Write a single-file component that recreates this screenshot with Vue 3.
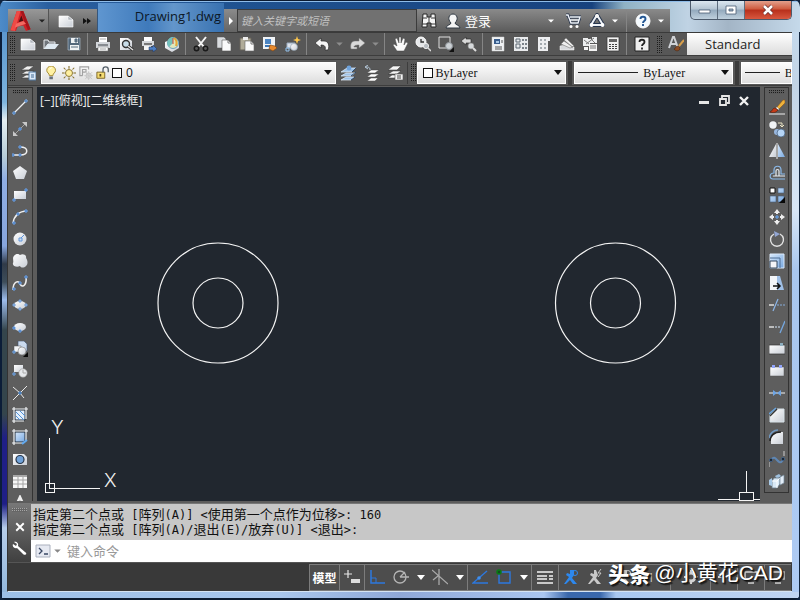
<script setup>
import { ref } from 'vue'

const icons = {
  logo: '<path d="M1 22 8 1h7l8 20-5 2-3-6-6 1-2 5z" fill="#cf2127"/><path d="M1 22 8 1h4L8 15l-2 8z" fill="#ee4a45"/><path d="m10 13 3-7 2 6z" fill="#4c1011"/><path d="M12 1h3l8 20-3 1z" fill="#a5151b"/><path d="m7 15 8-3 3 3-12 4z" fill="#f26a62"/>',
  page: '<path d="M1 3h9l5 4v7H1z" fill="url(#gw)" stroke="#fff" stroke-width=".6"/><path d="m10 3 5 4h-5z" fill="#aeb4bc" stroke="#fff" stroke-width=".5"/>',
  open: '<path d="M1 13V4h4l1 2h6v2H5z" fill="#70757b" stroke="#e8ebee"/><path d="m1 13 4-5h11l-4 5z" fill="#dfe9f1"/>',
  save: '<path d="M2 2h12v12H2z" fill="#53687b" stroke="#a8b8c5" stroke-width=".7"/><path d="M5 2h7v5H5zM4 9h9v5H4z" fill="#eef1f3"/><path d="M9 3h2v3H9zM5 11h7" stroke="#546a7d" fill="#66798a"/>',
  print: '<path d="M4 1h8v5H4z" fill="#fff"/><path d="M1 6h14v6H1z" fill="#d3d6da"/><path d="M3 8h10v2H3z" fill="#878b90"/><path d="M3 11h10v4H3z" fill="#f6f7f8" stroke="#777" stroke-width=".5"/><path d="M5 3h6M5 13h6" stroke="#aaa"/>',
  preview: '<path d="M2 2h8l4 3v9H2z" fill="url(#gw)"/><circle cx="8" cy="8" r="3.5" fill="#c8dce8" stroke="#333" stroke-width="1.4"/><path d="m10 10 5 4" stroke="#333" stroke-width="3"/><path d="m10 10 5 4" stroke="#e0e0e0" stroke-width="1.5"/>',
  publish: '<path d="M3 1h8v4H3z" fill="#fff"/><path d="M1 5h12v5H1z" fill="#d6d9dd"/><path d="M3 7h8v2H3z" fill="#777"/><path d="M3 10h7v4H3z" fill="#f5f5f5"/><path d="M8 11h4V9l4 4-4 3v-2H8z" fill="#4d7fc4" stroke="#1c3560" stroke-width=".5"/>',
  globe: '<path d="M1 6 8 3l7 3v6l-7 4-7-4z" fill="url(#gw)"/><circle cx="9" cy="7" r="5.5" fill="#dfe7bc" stroke="#6ca2bc"/><path d="M9 1v6l-4 4a6 6 0 0 1 4-10z" fill="#72c1bb"/><path d="M10 2c3 2 3 5 2 8" stroke="#e4a936" stroke-width="2" fill="none"/><path d="M9 2v6" stroke="#d24d3a"/>',
  cut: '<path d="m3 1 8 10M13 1 5 11" stroke="#f4f4f4" stroke-width="2"/><circle cx="3.5" cy="12.5" r="2.2" fill="none" stroke="#191919" stroke-width="1.5"/><circle cx="12.5" cy="12.5" r="2.2" fill="none" stroke="#191919" stroke-width="1.5"/>',
  copy: '<path d="M1 1h7l2 2v9H1z" fill="#d9dcdf" stroke="#555" stroke-width=".5"/><path d="M6 4h6l3 3v8H6z" fill="#fafafa" stroke="#555" stroke-width=".6"/><path d="M12 4v3h3" fill="none" stroke="#777"/>',
  paste: '<path d="M1 2h11v12H1z" fill="#b0ab98" stroke="#67635a"/><path d="M4 1h5v3H4z" fill="#eee"/><path d="M6 5h6l3 3v7H6z" fill="#fafafa" stroke="#666" stroke-width=".6"/><path d="M12 5v3h3" stroke="#777" fill="none"/>',
  match: '<path d="M1 1h12v12H1z" fill="#f0f3f6"/><path d="M3 3h6v5H3z" fill="#4c85c3"/><path d="M3 10h5" stroke="#3976b8" stroke-width="2"/><path d="m8 9 5 1 2 2-4 3-4-2z" fill="#e88a2c" stroke="#80420c" stroke-width=".6"/>',
  block: '<path d="M2 7h8v5H2z" fill="#dce3ec" stroke="#9bacbf"/><circle cx="9" cy="11" r="3.5" fill="url(#gw)" stroke="#8799aa" stroke-width=".6"/><path d="M1 12h3v3H1z" fill="none" stroke="#93c2ed"/><path d="m12 0 1 3 3 1-3 1-1 3-1-3-3-1 3-1z" fill="#ffc74d"/>',
  undo: '<path d="m1 7 6-5v3h3c4 0 6 4 4 9h-3c1-3 0-5-4-5v3z" fill="#f5f5f5" stroke="#2c2c2c" stroke-width=".7"/>',
  redo: '<path d="M15 7 9 2v3H5C1 5 0 9 1 13h6v-2H4c0-1 1-2 5-2v3z" fill="#dadada" stroke="#777" stroke-width=".5"/>',
  hand: '<path d="m5 15-4-6 1-1 3 2-2-7 2-1 2 5V1h2v6l2-5 2 1-1 6 2-3 2 1-4 8z" fill="#fafafa" stroke="#444" stroke-width=".5"/>',
  zoomrt: '<circle cx="6" cy="6" r="5" fill="#e7e9eb" stroke="#fff"/><path d="M6 3v3h3" fill="none" stroke="#333" stroke-width="1.3"/><circle cx="11" cy="10" r="2.6" fill="#b9bec3" stroke="#eee"/><path d="m13 12 3 3" stroke="#ddd" stroke-width="1.5"/>',
  zoomwin: '<path d="M1 1h11v11H1z" fill="none" stroke="#dedede"/><circle cx="11" cy="10" r="3.5" fill="#ccd1d5" stroke="#8c9297"/><path d="M11 16h5v-5z" fill="#111"/>',
  zoomprev: '<path d="m0 5 5-4v2h5v4H5v2z" fill="#d8d8d8" stroke="#222" stroke-width=".6"/><circle cx="10" cy="10" r="3" fill="#d6d9db" stroke="#888" stroke-width=".6"/><path d="m12 12 3 3" stroke="#ddd" stroke-width="2"/>',
  props: '<path d="M2 1h12v14H2z" fill="#f0f2f4" stroke="#ccc" stroke-width=".5"/><path d="M4 3h6v5H4z" fill="#3a5e8d"/><path d="M6 5h3v2H6z" fill="#a9c8e8"/><path d="M5 11h7M5 13h7M12 4v3" stroke="#555"/>',
  design: '<path d="M1 1h14v14H1z" fill="#e9ebed"/><path d="M3 3h4v3H3zM3 8h4v4H3z" fill="none" stroke="#5d6873"/><path d="M9 3h2v2H9zm3 0h2v2h-2zM9 7h2v2H9zm3 0h2v2h-2zM9 11h2v2H9zm3 0h2v2h-2z" fill="#7b8289"/>',
  palette: '<path d="M2 1h12v4h-2v10H2z" fill="#edeef0"/><path d="M4 3h2v2H4zm4 0h2v2H8zM4 7h2v2H4zm4 0h2v2H8zm-4 4h2v2H4zm4 0h2v2H8z" fill="#a5abb0"/>',
  sheet: '<path d="M1 10v4h14v-3L6 9z" fill="#d7d9dc" stroke="#fff" stroke-width=".5"/><path d="m2 8 3-3 9 6-3 1zM5 4l2-2 8 8-2 1z" fill="#eee" stroke="#777" stroke-width=".6"/>',
  markup: '<path d="M1 2h5v1h4V1h5v6H8v3H1z" fill="#eceeef"/><path d="m2 4 5 4M8 2l5 5M4 8l8-6" stroke="#777"/><path d="M7 8h8v7H7zM2 11h4v3H2z" fill="#f4f4f4"/><path d="M8 10h6M8 12h6" stroke="#777"/>',
  calc: '<path d="M2 1h12v14H2z" fill="#f2f2f2" stroke="#333" stroke-width=".7"/><path d="M4 3h8v3H4z" fill="#666"/><path d="M4 8h2v1H4zm3 0h2v1H7zm3 0h2v1h-2zm-6 2h2v1H4zm3 0h2v1H7zm3 0h2v1h-2zm-6 2h2v1H4zm3 0h2v1H7zm3 0h2v1h-2z" fill="#444"/>',
  help: '<path d="M1 1h14v14H1z" fill="#eee" stroke="#222"/><path d="M5.5 6c0-3 5-3 5 0 0 2-2.500 2-2.500 4M8 11.500v2" fill="none" stroke="#222" stroke-width="1.800"/>',
  style: '<path d="M1 12 5 1h1l4 11M3 8h5" fill="none" stroke="#cfd2d6" stroke-width="2"/><path d="m11 10 5-6" stroke="#d79e4a" stroke-width="2"/><path d="M6 13c2 0 1-3 4-3l2 2c0 3-4 4-6 1z" fill="#8b4b23" stroke="#4b2106" stroke-width=".5"/>',
  layers: '<path d="M1 5 7 1h7l-5 4zM1 9l5-3h8l-4 3zM1 13l5-3h6l-3 3z" fill="#f0f0f0" stroke="#454545" stroke-width=".7"/><path d="M9 7h7v8H9z" fill="#dceafa" stroke="#557da5"/><path d="M11 10h3M11 12h3" stroke="#416991"/>',
  laycur: '<path d="m0 7 6-4h9l-4 4zM0 11l5-3h9l-4 3zM0 15l5-3h8l-3 3z" fill="#9fc1e5" stroke="#e8f3ff" stroke-width=".7"/><circle cx="8" cy="3" r="2.400" fill="#6fa3dc"/><path d="m11 7 4-4M10 11l5-4M10 15l4-3" stroke="#2d4c70"/>',
  layprev: '<path d="m3 8 4-3h8l-4 3zM3 12l4-3h8l-4 3zM3 16l4-3h7l-3 3z" fill="#fff" stroke="#444" stroke-width=".5"/><path d="M6 5C6 2 4 2 2 2m2-2L1 2l3 2" fill="none" stroke="#b7cadb"/>',
  laystate: '<path d="m1 5 5-4h8l-4 4zM1 9l5-3h8l-4 3zM1 13l4-3h5l-2 3z" fill="#f5f5f5" stroke="#333" stroke-width=".5"/><path d="M8 9h8v6H8z" fill="#f4f4f4" stroke="#555" stroke-width=".6"/><path d="M10 11h4M10 13h4" stroke="#444"/>',
  bulb: '<path d="M5 11c0-3-3-3-3-6a5 5 0 0 1 10 0c0 3-3 3-3 6z" fill="#fff1a3" stroke="#9d8126"/><path d="M5 12h4v3H5z" fill="#68717c"/><path d="M5 4c1-2 3-2 3-2" stroke="#fff" fill="none"/>',
  sun: '<circle cx="8" cy="8" r="4" fill="#fff0a0" stroke="#806a23"/><path d="M8 0v3m0 10v3M0 8h3m10 0h3M2 2l2 2m8 8 2 2M2 14l2-2m8-8 2-2" stroke="#806a23" stroke-width="1.200"/>',
  freeze: '<path d="M4 11H1V1h10v3M4 4h4v3H4zv7" fill="none" stroke="#a2a2a2" stroke-width="1.300"/><circle cx="11" cy="11" r="3" fill="#ececec" stroke="#bbb"/><path d="M11 6v10M6 11h10M7 7l8 8m0-8-8 8" stroke="#c7c7c7"/>',
  lock: '<path d="M1 7h9v7H1z" fill="#f5dc72" stroke="#735b1a"/><path d="M8 7V4c0-4 6-4 6 0v3" fill="none" stroke="#55606a" stroke-width="1.500"/><path d="M5 9v3" stroke="#574312" stroke-width="2"/>',
  arrow: '<path d="m4 6 4 4 4-4z" fill="currentColor"/>',
  binoc: '<path d="M2 1h4v3h4V1h4l1 13h-5v-4H6v4H1z" fill="#f5f5f5" stroke="#272727"/><path d="M2 5h4m4 0h4M1 11h5m4 0h5M8 4v6" stroke="#373737"/>',
  user: '<path d="M1 15c0-3 5-3 5-5-4-4-2-9 2-9s6 5 2 9c0 2 5 2 5 5z" fill="#f5f5f5" stroke="#303943"/>',
  cart: '<path d="M1 2h2l3 8h7l2-6H5" fill="none" stroke="#233149" stroke-width="3"/><path d="M1 2h2l3 8h7l2-6H5m0 3h9" fill="none" stroke="#f0f3f8" stroke-width="1.500"/><circle cx="6" cy="13.500" r="1.500" fill="#fff"/><circle cx="12" cy="13.500" r="1.500" fill="#fff"/>',
  cloud: '<path d="M8 2 2 12h12z" fill="none" stroke="#27364e" stroke-width="4" stroke-linejoin="round"/><path d="M8 2 2 12h12z" fill="none" stroke="#eef2f7" stroke-width="2" stroke-linejoin="round"/><circle cx="8" cy="3" r="2" fill="#f5f5f5"/><circle cx="2.500" cy="12" r="2" fill="#fff"/><circle cx="13.500" cy="12" r="2" fill="#fff"/>',
  qhelp: '<circle cx="8" cy="8" r="7" fill="#f5fbff" stroke="#fff"/><path d="M5.500 6c0-3 5-3 5 0 0 2-2.500 2-2.500 4M8 11v2" fill="none" stroke="#245793" stroke-width="1.900"/>',
  line: '<path d="M1 15 15 1" stroke="#eef0f2" stroke-width="1.300"/><path d="M1 13h2v2H1zM13 1h2v2h-2z" fill="#334967" stroke="#70a8ec"/>',
  xline: '<path d="M2 14 14 2" stroke="#a5a5a5"/><path d="M10 1h5v5zM1 10v5h5z" fill="#c8c8c8"/><path d="M7 7h2v2H7z" fill="#1f4e95" stroke="#6ba5f1"/>',
  pline: '<path d="M1 12h7c9 0 9-8 0-8" fill="none" stroke="#eee" stroke-width="1.500"/><path d="M0 11h2v2H0zm7 0h2v2H7zm0-8h2v2H7z" fill="#334967" stroke="#6da7f3"/>',
  polygon: '<path d="m8 1 7 5-3 8H4L1 6z" fill="url(#gw)"/>',
  rect: '<path d="M2 4h12v8H2z" fill="url(#gw)"/><path d="M1 12h2v2H1zM13 2h2v2h-2z" fill="#334967" stroke="#6da7f3"/>',
  arc: '<path d="M1 14C2 7 7 2 15 2" fill="none" stroke="#eee" stroke-width="1.400"/><path d="M1 13h2v2H1zm4-9h2v2H5zm8-3h2v2h-2z" fill="#334967" stroke="#6da7f3"/>',
  circle: '<circle cx="8" cy="8" r="6.500" fill="url(#gw)"/><path d="m8 8 4-4" stroke="#5890d8"/><path d="M7 7h3v3H7z" fill="#cfdeef" stroke="#6298dc"/>',
  revcloud: '<path d="M2 3c2-3 5-2 6-1 3-2 7 0 6 3 2 3 2 6 0 8-2 2-5 2-6 0-3 2-8 0-7-3 1-2-1-5 1-7z" fill="url(#gw)"/>',
  spline: '<path d="M1 15C1 6 7 5 8 9c3 5 7 0 6-7" fill="none" stroke="#eee" stroke-width="1.500"/><path d="M1 13h2v2H1zm6-6h2v2H7zm6-6h2v2h-2z" fill="#334967" stroke="#6da7f3"/>',
  ellipse: '<ellipse cx="8" cy="8" rx="6" ry="4" fill="url(#gw)"/><path d="M1 7h2v2H1zm12 0h2v2h-2zM7 3h2v2H7zm0 8h2v2H7z" fill="#b9cde6" stroke="#6d9bd8"/>',
  elarc: '<ellipse cx="8" cy="8" rx="6" ry="4" fill="url(#gw)"/><path d="M1 8h2v2H1zm6 3h2v2H7z" fill="#334967" stroke="#6da7f3"/>',
  insert: '<path d="M6 0h6l3 3v7H6z" fill="#cad9ec" stroke="#3c536f" stroke-width=".6"/><path d="M2 5h7v6H2z" fill="#f3f5f7" stroke="#555" stroke-width=".5"/><circle cx="10" cy="10" r="4" fill="url(#gw)" stroke="#777" stroke-width=".6"/><path d="M1 10h2v2H1z" fill="#345" stroke="#77adf0"/><path d="M11 16h5v-5z" fill="#080808"/>',
  makeblk: '<path d="M2 2h9v7H2z" fill="url(#gw)"/><circle cx="11" cy="10" r="4.200" fill="#e6e8eb" stroke="#999" stroke-width=".6"/><path d="M11 7v3h3" fill="none" stroke="#aaa"/><path d="M1 10h2v2H1z" fill="#345" stroke="#77adf0"/>',
  point: '<path d="m1 15 14-14M1 2l7 6 4 5" fill="none" stroke="#e9e9e9"/><path d="M7 7h2v2H7z" fill="#234570" stroke="#619ce0"/>',
  hatch: '<path d="M3 3h10v10H3z" fill="#e4effb" stroke="#1d2937"/><path d="m4 5 8 8M4 9l4 4M8 4l5 5" stroke="#4f91d9"/><path d="M0 2h16M0 14h12M2 0v16M14 0v12" stroke="#f0f3f6" stroke-width="1.200"/>',
  gradient: '<path d="M3 3h10v10H3z" fill="url(#gb)" stroke="#1d2937"/><path d="M0 2h16M0 14h11M2 0v16M14 0v12" stroke="#f0f3f6" stroke-width="1.200"/><path d="m10 15 5-4" stroke="#62aaf1" stroke-width="2"/>',
  region: '<path d="M1 3h11l3 3v8H1z" fill="url(#gw)"/><circle cx="8" cy="8.500" r="4" fill="#70a2d9" stroke="#28364a" stroke-width="1.200"/>',
  table: '<path d="M1 2h14v13H1z" fill="#f7f7f7"/><path d="M1 3h14" stroke="#a7a7a7" stroke-width="2"/><path d="M1 7h14M1 11h14M6 4v11m5-11v11" stroke="#a5a5a5"/>',
  text: '<path d="M3 13 8 2l5 11" fill="none" stroke="#eee" stroke-width="2.500"/>',
  erase: '<path d="m8 8 6-7h2v3l-6 6z" fill="#efb23b" stroke="#8c5617" stroke-width=".6"/><path d="m8 8 2 2-1 1-2-2z" fill="#fff"/><path d="M1 13c3-1 2-4 5-4l3 2c-2 3-5 3-8 2z" fill="#c53b18" stroke="#4e1b0a" stroke-width=".6"/><path d="M0 15h16" stroke="#eee"/>',
  dup: '<circle cx="4" cy="4" r="3.700" fill="#f1f4f7"/><circle cx="8" cy="11" r="3" fill="#98b7df"/><circle cx="12" cy="12" r="4" fill="#b6d5f6" stroke="#405c7b" stroke-width=".7"/><path d="M9 2h4v3m-2-1 2 2 2-2" fill="none" stroke="#e9e3c4"/>',
  mirror: '<path d="M7 1v13H0z" fill="url(#gw)"/><path d="M9 1v13h7z" fill="url(#gb)"/><path d="M8 0v16" stroke="#f0f0f0"/>',
  offset: '<path d="M16 14H4c-4 0-4-6 1-6V5c0-5 7-5 7 0v4h4" fill="none" stroke="#8ab9ea" stroke-width="1.200"/><path d="M16 11H5c-1 0-1 0 2 0V6c0-2 3-2 3 0v5" fill="none" stroke="#e8eef4" stroke-width="1.200"/>',
  array: '<path d="M1 1h5v5H1z" fill="#fff" stroke="#111"/><path d="M9 1h6v5H9zM1 9h6v6H1zM9 9h6v6H9z" fill="url(#gb)" stroke="#445c78" stroke-width=".6"/><path d="M10 16h6v-6z" fill="#080808"/>',
  move: '<path d="m8 0 3 4H9v1H7V4H5zm0 16-3-4h2v-1h2v1h2zM0 8l4-3v2h1v2H4v2zm16 0-4 3V9h-1V7h1V5z" fill="#eee"/><path d="M7 7h2v2H7z" fill="#254d7e" stroke="#75adf1"/>',
  rotate: '<path d="M5 3a6.500 6.500 0 1 0 6 0" fill="none" stroke="#e2e2e2" stroke-width="1.400"/><path d="m5 0 6 3-5 3z" fill="#92a5d2"/>',
  scale: '<path d="M1 1h14v14H1z" fill="url(#gb)" stroke="#dceafb"/><path d="M1 8h7v7H1z" fill="#f4f5f7" stroke="#35485f"/><path d="M1 5h10v10" fill="none" stroke="#4c6c93"/>',
  stretch: '<path d="M1 1h8v14H1z" fill="#f2f5f9"/><path d="M8 1h3l4 14H8z" fill="#9fbfe6"/><path d="M4 11h7m-3-3 3 3-3 3" fill="none" stroke="#101010" stroke-width="1.500"/>',
  trim: '<path d="M0 8h5" stroke="#f2f2f2" stroke-width="1.300"/><path d="M8 8h8" stroke="#85abd8" stroke-dasharray="2 1"/><path d="M4 14 9 2" stroke="#8cb6e9" stroke-width="1.200"/>',
  extend: '<path d="M0 8h5" stroke="#f2f2f2" stroke-width="1.300"/><path d="M6 8h6" stroke="#d5e7fb" stroke-dasharray="2 1"/><path d="m11 14 5-12" stroke="#75a7df" stroke-width="1.300"/>',
  breakpt: '<path d="M0 4h16v9H0z" fill="url(#gw)" stroke="#333" stroke-width=".7"/><path d="M11 2h3v3h-3z" fill="#8daebf"/>',
  breaks: '<path d="M1 4h14v9H1z" fill="url(#gw)" stroke="#555" stroke-width=".5"/><path d="M3 2h3v3H3zm7 0h3v3h-3z" fill="#92a5fb"/>',
  join: '<path d="M0 8h16" stroke="#f3f3f3"/><path d="m4 5 4 3-4 3zm8 0L8 8l4 3z" fill="#6ea5e4"/>',
  chamfer: '<path d="M1 15V8l7-6h7v13z" fill="url(#gw)" stroke="#d7e2e8"/><path d="m1 9 7-7" stroke="#333" stroke-width="1.500"/><path d="m0 7 7-6" stroke="#6aa5df" stroke-width="1.500"/>',
  fillet: '<path d="M2 15v-4c0-5 4-8 10-8h2v12z" fill="url(#gw)"/><path d="M1 12C1 7 5 3 12 3" fill="none" stroke="#222" stroke-width="1.500"/><path d="M0 9c1-5 5-8 9-8" fill="none" stroke="#6f97c0" stroke-width="1.500"/>',
  blend: '<path d="M0 16v-5M15 5V0" fill="none" stroke="#ccc"/><path d="M2 9c5-8 7 8 12 0" fill="none" stroke="#5f86b2" stroke-width="2"/><circle cx="2" cy="9" r="1.500" fill="#111" stroke="#41648c"/><circle cx="14" cy="8" r="1.500" fill="#111" stroke="#41648c"/>',
  explode: '<path d="m6 3 4-2 2 2-4 3z" fill="#9fc0de"/><path d="m3 8 2-3h6v6l-3 4H3z" fill="#d9e9f6" stroke="#697c8b" stroke-width=".8"/><path d="M3 8h5v7M8 8l3-3" fill="none" stroke="#fff"/><path d="m11 4 4-2v8l-4 2z" fill="#e3edf7" stroke="#71879a" stroke-width=".7"/><path d="m0 7 3-2v8l-3-1z" fill="#a8c9e6"/>',
  wrench: '<path d="M2 2c2-1 5 1 4 4l7 6c3 2 0 4-2 2L5 8C2 9 0 6 1 4l3 2 1-2z" fill="#fff"/>',
  close: '<path d="m3 3 10 10M13 3 3 13" stroke="currentColor" stroke-width="2.500"/>',
  prompt: '<path d="M1 2h14v12H1z" fill="#e6e9f1" stroke="#aab0bd"/><path d="m4 5 3 3-3 3m5 0h4" fill="none" stroke="#394763" stroke-width="1.300"/>',
  grid: '<path d="M4 1v8M0 5h8" stroke="#e7e7e7" stroke-width="1.200"/><path d="M7 10h9v4H7z" fill="#ddd"/>',
  ortho: '<path d="M2 1v13h14" fill="none" stroke="#2d78de" stroke-width="1.500"/><path d="M2 9h5v5" fill="none" stroke="#2d78de"/>',
  polar: '<circle cx="7" cy="8" r="6" fill="none" stroke="#b5b5b5" stroke-width="1.300"/><path d="M7 8h9M7 8l5-5" stroke="#b5b5b5" stroke-width="1.300"/>',
  iso: '<path d="M0 1 16 15M7 0v16M1 11l5-4" stroke="#a9a9a9" stroke-width="1.300"/>',
  track: '<path d="M15 2 1 14h15" fill="none" stroke="#2d78de" stroke-width="1.400"/><circle cx="7" cy="9" r="1.800" fill="#3f8fee"/>',
  osnap: '<path d="M3 3h11v11H3z" fill="none" stroke="#2d78de" stroke-width="1.400"/><circle cx="3" cy="3" r="2" fill="#154c1d" stroke="#087d14" stroke-width="1.500"/>',
  weight: '<path d="M0 3h16M0 7h10m2 0h4M0 10h10m2 0h4M0 14h16" stroke="#c9c9c9" stroke-width="2"/>',
  anno: '<path d="M7 1h4v5l-2 3 5 6h-4l-3-4-4 4H1l5-7-3-2 1-2 3 1z" fill="currentColor"/><circle cx="12" cy="4" r="2.500" fill="none" stroke="currentColor"/>',
  spark: '<path d="M7 1h2l2 5-2 3 5 6h-4l-3-4-4 4H1l5-7-3-2 1-2 3 1z" fill="currentColor"/><path d="m14 0-3 4h3l-3 4" fill="none" stroke="currentColor"/>',
  gear: '<circle cx="8" cy="8" r="4" fill="none" stroke="#d4d4d4" stroke-width="3"/><path d="M8 1v3m0 8v3M1 8h3m8 0h3" stroke="#d4d4d4" stroke-width="2"/>',
  plus: '<path d="M8 2v12M2 8h12" stroke="#d4d4d4" stroke-width="2"/>',
  tray: '<path d="M2 3h12v7H2zm3 11h6" fill="none" stroke="#d4d4d4" stroke-width="1.500"/>',
}

const standard = [
  ['page', 'open', 'save'],
  ['print', 'preview', 'publish', 'globe'],
  ['cut', 'copy', 'paste', 'match', 'block'],
  ['undo', 'redo'],
  ['hand', 'zoomrt', 'zoomwin', 'zoomprev'],
  ['props', 'design', 'palette', 'sheet', 'markup', 'calc'],
  ['help'],
]
const drawTools = ['line', 'xline', 'pline', 'polygon', 'rect', 'arc', 'circle', 'revcloud', 'spline', 'ellipse', 'elarc', 'insert', 'makeblk', 'point', 'hatch', 'gradient', 'region', 'table', 'text']
const modifyTools = ['erase', 'dup', 'mirror', 'offset', 'array', 'move', 'rotate', 'scale', 'stretch', 'trim', 'extend', 'breakpt', 'breaks', 'join', 'chamfer', 'fillet', 'blend', 'explode']
const history = [
  ['指定第二个点或', ' [', '阵列', '(A)] <', '使用第一个点作为位移', '>: 160'],
  ['指定第二个点或', ' [', '阵列', '(A)/', '退出', '(E)/', '放弃', '(U)] <', '退出', '>:'],
]
const query = ref('')
const command = ref('')
</script>

<template>
  <div class="window">
    <svg class="defs" aria-hidden="true">
      <defs>
        <linearGradient id="gw" x1="0" y1="0" x2="1" y2="1"><stop offset="0" stop-color="#fff" /><stop offset="1" stop-color="#c9ced6" /></linearGradient>
        <linearGradient id="gb" x1="0" y1="0" x2="1" y2="1"><stop offset="0" stop-color="#d5e7fa" /><stop offset="1" stop-color="#78a8e0" /></linearGradient>
      </defs>
    </svg>

    <header class="titlebar">
      <button class="appbtn" aria-label="Application menu">
        <svg class="logo" viewBox="0 0 24 24" v-html="icons.logo"></svg>
        <svg class="ic" viewBox="0 0 16 16" v-html="icons.arrow"></svg>
      </button>
      <div class="quick">
        <button aria-label="New"><svg class="ic" viewBox="0 0 16 16" v-html="icons.page"></svg></button>
        <button aria-label="More"><svg class="more" viewBox="0 0 8 8"><path d="M0 1l4 3-4 3zM4 1l4 3-4 3z" /></svg></button>
      </div>
      <h1 class="title">Drawing1.dwg</h1>
      <button class="expand" aria-label="Expand search"><svg viewBox="0 0 6 8"><path d="m1 0 4 4-4 4z" fill="#fff" /></svg></button>
      <input v-model="query" class="search" type="search" placeholder="键入关键字或短语" aria-label="Search">
      <div class="info">
        <button aria-label="Find"><svg class="ic" viewBox="0 0 16 16" v-html="icons.binoc"></svg></button>
        <button class="signin"><svg class="ic" viewBox="0 0 16 16" v-html="icons.user"></svg><span>登录</span></button>
        <button class="push slim" aria-label="Account menu"><svg class="ic" viewBox="0 0 16 16" v-html="icons.arrow"></svg></button>
        <button aria-label="Store"><svg class="ic" viewBox="0 0 16 16" v-html="icons.cart"></svg></button>
        <button aria-label="Cloud"><svg class="ic" viewBox="0 0 16 16" v-html="icons.cloud"></svg></button>
        <button class="slim" aria-label="Cloud menu"><svg class="ic" viewBox="0 0 16 16" v-html="icons.arrow"></svg></button>
        <i class="bar"></i>
        <button aria-label="Help"><svg class="ic" viewBox="0 0 16 16" v-html="icons.qhelp"></svg></button>
        <button class="slim" aria-label="Help menu"><svg class="ic" viewBox="0 0 16 16" v-html="icons.arrow"></svg></button>
      </div>
      <div class="winbtns">
        <button aria-label="Minimize"><svg viewBox="0 0 14 12"><path d="M2 6h11v3H2z" fill="#fff" stroke="#4c5d73" stroke-width=".8" /></svg></button>
        <button aria-label="Maximize"><svg viewBox="0 0 14 12"><path d="M2 2h10v8H2zm3 3h4v2H5z" fill="#fff" fill-rule="evenodd" stroke="#4c5d73" stroke-width=".8" /></svg></button>
        <button class="x" aria-label="Close"><svg viewBox="0 0 14 12"><path d="m3 2 8 8m0-8-8 8" stroke="#6b3030" stroke-width="4" /><path d="m3 2 8 8m0-8-8 8" stroke="#fff" stroke-width="2.500" /></svg></button>
      </div>
    </header>

    <div class="body">
      <div class="toolbar">
        <i class="grip"></i>
        <div v-for="(group, g) in standard" :key="g" class="group">
          <template v-for="name in group" :key="name">
            <button class="tool" :aria-label="name"><svg class="ic" viewBox="0 0 16 16" v-html="icons[name]"></svg></button>
            <button v-if="g === 3" class="drop" :aria-label="name + ' list'"><svg class="ic" viewBox="0 0 16 16" v-html="icons.arrow"></svg></button>
          </template>
        </div>
        <i class="grip second"></i>
        <button class="tool" aria-label="Text style"><svg class="ic" viewBox="0 0 16 16" v-html="icons.style"></svg></button>
        <select class="textstyle" aria-label="Text style list"><option>Standard</option></select>
      </div>

      <div class="toolbar props">
        <i class="grip"></i>
        <button class="tool" aria-label="Layer manager"><svg class="ic" viewBox="0 0 16 16" v-html="icons.layers"></svg></button>
        <label class="combo layer">
          <select aria-label="Layer"><option>0</option></select>
          <span class="deco">
            <svg v-for="n in ['bulb', 'sun', 'freeze', 'lock']" :key="n" class="ic" viewBox="0 0 16 16" v-html="icons[n]"></svg>
            <i class="swatch"></i>
          </span>
          <i class="tri"></i>
        </label>
        <div class="laytools">
          <button v-for="n in ['laycur', 'layprev', 'laystate']" :key="n" class="tool" :aria-label="n"><svg class="ic" viewBox="0 0 16 16" v-html="icons[n]"></svg></button>
        </div>
        <i class="grip"></i>
        <label class="combo color">
          <select aria-label="Color"><option>ByLayer</option></select>
          <span class="deco"><i class="swatch"></i></span>
          <i class="tri"></i>
        </label>
        <i class="split"></i>
        <label class="combo ltype">
          <select aria-label="Linetype"><option>ByLayer</option></select>
          <span class="deco"><i class="rule"></i></span>
          <i class="tri"></i>
        </label>
        <i class="split"></i>
        <label class="combo lweight">
          <select aria-label="Lineweight"><option>ByLayer</option></select>
          <span class="deco"><i class="rule"></i></span>
        </label>
      </div>

      <main class="work">
        <nav class="side left" aria-label="Draw">
          <i class="hgrip"></i>
          <button v-for="n in drawTools" :key="n" :aria-label="n"><svg class="ic" viewBox="0 0 16 16" v-html="icons[n]"></svg></button>
        </nav>
        <section class="canvas">
          <div class="viewbar">
            <span>[−][俯视][二维线框]</span>
            <div class="docbtns">
              <button aria-label="Minimize drawing"><svg viewBox="0 0 12 12"><path d="M1 6h10v3H1z" fill="#e6e6e6" /></svg></button>
              <button aria-label="Restore drawing"><svg viewBox="0 0 12 12"><path d="M4 3V1h7v7H9M2 4h6v6H2z" fill="none" stroke="#e6e6e6" stroke-width="1.800" /></svg></button>
              <button aria-label="Close drawing"><svg viewBox="0 0 12 12"><path d="m2 2 8 8m0-8-8 8" stroke="#f2f2f2" stroke-width="2.400" /></svg></button>
            </div>
          </div>
          <svg class="drawing" viewBox="0 0 723 414" preserveAspectRatio="xMinYMax meet">
            <g fill="none" stroke="#f4f4f4" stroke-width="1.200">
              <circle cx="181" cy="216" r="60" /><circle cx="181" cy="216" r="25" />
              <circle cx="578.500" cy="216" r="60" /><circle cx="578.500" cy="216" r="25" />
            </g>
            <g fill="none" stroke="#f4f4f4" shape-rendering="crispEdges">
              <path d="M12.500 351v50H63M8.500 396.500h9v9h-9z" />
              <path d="M709.500 384v21M681 412.500h42" /><path d="M702.500 405.500h14v8h-14z" fill="#21272f" />
            </g>
            <text x="14" y="347">Y</text><text x="67" y="400">X</text>
          </svg>
        </section>
        <nav class="side right" aria-label="Modify">
          <i class="hgrip"></i>
          <button v-for="n in modifyTools" :key="n" :aria-label="n"><svg class="ic" viewBox="0 0 16 16" v-html="icons[n]"></svg></button>
        </nav>
      </main>

      <section class="command">
        <div class="cmdside">
          <i class="hgrip pale"></i>
          <button aria-label="Close command line"><svg viewBox="0 0 16 16" v-html="icons.close"></svg></button>
          <button aria-label="Customize"><svg class="big" viewBox="0 0 16 16" v-html="icons.wrench"></svg></button>
        </div>
        <div class="cmdmain">
          <div class="history">
            <p v-for="(row, r) in history" :key="r"><span v-for="(part, i) in row" :key="i" :class="{ mono: i % 2 }">{{ part }}</span></p>
          </div>
          <div class="entry">
            <button aria-label="Recent commands"><svg class="ic" viewBox="0 0 16 16" v-html="icons.prompt"></svg><svg class="ic small" viewBox="0 0 16 16" v-html="icons.arrow"></svg></button>
            <input v-model="command" type="text" placeholder="键入命令" aria-label="Command">
          </div>
        </div>
      </section>

      <footer class="status">
        <div class="cell"><button class="model">模型</button></div>
        <div class="cell"><button aria-label="Grid"><svg class="ic" viewBox="0 0 16 16" v-html="icons.grid"></svg></button></div>
        <div class="cell">
          <button aria-label="Ortho"><svg class="ic" viewBox="0 0 16 16" v-html="icons.ortho"></svg></button>
          <button aria-label="Polar"><svg class="ic" viewBox="0 0 16 16" v-html="icons.polar"></svg></button>
          <button class="dd" aria-label="Polar list"><i class="tri"></i></button>
          <button aria-label="Isometric"><svg class="ic" viewBox="0 0 16 16" v-html="icons.iso"></svg></button>
          <button class="dd" aria-label="Isometric list"><i class="tri"></i></button>
        </div>
        <div class="cell">
          <button aria-label="Tracking"><svg class="ic" viewBox="0 0 16 16" v-html="icons.track"></svg></button>
          <button aria-label="Object snap"><svg class="ic" viewBox="0 0 16 16" v-html="icons.osnap"></svg></button>
          <button class="dd" aria-label="Object snap list"><i class="tri"></i></button>
        </div>
        <div class="cell roomy"><button aria-label="Lineweight"><svg class="ic" viewBox="0 0 16 16" v-html="icons.weight"></svg></button></div>
        <div class="cell grow">
          <button class="on" aria-label="Annotation visibility"><svg class="ic" viewBox="0 0 16 16" v-html="icons.anno"></svg></button>
          <button aria-label="Auto scale"><svg class="ic" viewBox="0 0 16 16" v-html="icons.spark"></svg></button>
          <button class="scale"><svg class="ic" viewBox="0 0 16 16" v-html="icons.anno"></svg><span>1:1</span></button>
        </div>
        <div class="cell wide"><button aria-label="Workspace"><svg class="ic" viewBox="0 0 16 16" v-html="icons.gear"></svg></button></div>
        <div class="cell roomy"><button aria-label="Add"><svg class="ic" viewBox="0 0 16 16" v-html="icons.plus"></svg></button></div>
        <div class="cell roomy"><button aria-label="Tray"><svg class="ic" viewBox="0 0 16 16" v-html="icons.tray"></svg></button></div>
        <div class="cell roomy"><button aria-label="Clean screen"><svg class="ic" viewBox="0 0 16 16" v-html="icons.tray"></svg></button></div>
        <div class="mark"><b>头条</b><span>@小黄花CAD</span></div>
      </footer>
    </div>
  </div>
</template>

<style>
body { margin: 0; background: #10243f; }
</style>

<style scoped>
* { box-sizing: border-box; }
.window {
  height: 100vh; display: flex; flex-direction: column; overflow: hidden;
  padding: 0 8px 8px 7px;
  border-radius: 7px;
  font-family: "Open Sans", "Noto Sans CJK SC", sans-serif; font-size: 12px; color: #fff;
  background:
    linear-gradient(#0b1d38, #0b1d38) 0 0 / 2px 100% no-repeat,
    linear-gradient(#10233c, #10233c) 100% 0 / 1px 100% no-repeat,
    linear-gradient(#0d1c30, #0d1c30) 0 100% / 100% 2px no-repeat,
    linear-gradient(90deg, #9cc0e8, #a9c7ec 35%, #8fa8d8 50%, #aac6f0 68%, #3a68ac 71%, #3a68ac 75%, #a9c8f0 77%, #c0d5f2) 0 100% / 100% 8px no-repeat,
    linear-gradient(#c6dcf0, #c2d4e6 14%, #d8e6f6 35%, #a8c6ee 45%, #aecbf4 100%) 100% 0 / 8px 100% no-repeat,
    linear-gradient(#4d8ac6, #7db4df 17%, #e4eef2 20%, #b7cdd8 26%, #8faee4 30%, #87a6de 41%, #303a48 44%, #3d4d5a 47%, #9dbdee 50%, #34454c 55%, #34454c 69%, #1f1f86 73%, #1f1f86 84%, #b6cdea 88%, #8fb6dd) 0 0 / 7px 100% no-repeat;
}
.defs { width: 0; height: 0; position: absolute; }
button { border: 0; padding: 0; margin: 0; background: none; color: inherit; font: inherit; display: flex; align-items: center; justify-content: center; }
.ic { width: 16px; height: 16px; flex: none; display: block; }

.titlebar {
  flex: none; height: 32px; display: flex; align-items: flex-end; margin: 0 -8px 0 -7px; padding: 0 8px;
  border-top: 1px solid #0b1a30; box-shadow: inset 0 1px #8fbce8;
  background: linear-gradient(90deg, #4d8bc8, #2a5f9f 6%, #1f5290 30%, #17427e 74%, #8fb2c4 78%, #c0d3e4 86%, #a3b5c6 91%, #c5d9ea);
}
.appbtn { width: 41px; height: 23px; padding-left: 1px; gap: 4px; justify-content: flex-start; background: linear-gradient(#989898, #6d6d6d); color: #222; border-right: 1px solid #555; }
.logo { flex: none; width: 23px; height: 22px; }
.appbtn .ic { width: 12px; }
.quick { width: 49px; height: 23px; display: flex; align-items: center; padding-left: 9px; gap: 9px; background: linear-gradient(#8c8c8c, #5a5a5a); border-right: 1px solid #35567c; }
.more { width: 8px; height: 8px; fill: #111; }
.title { margin: 0; flex: none; width: 126px; height: 29px; font: 400 13px/27px "Open Sans", sans-serif; text-align: right; padding-right: 3px; color: #0c1726; background: linear-gradient(90deg, #5f96d0, #3f7abb 40%, #6396cb 60%, #3871b0); }
.expand { width: 13px; height: 23px; background: linear-gradient(#8b8b8b, #646464); }
.expand svg { width: 6px; height: 8px; }
.search { flex: 0 1 180px; min-width: 0; height: 23px; padding: 0 3px 2px; border: 1px solid #3c3c3c; border-radius: 0; background: #717171; color: #fff; font: italic 11px "Noto Sans CJK SC", sans-serif; appearance: none; outline: 0; }
.search::placeholder { color: #c0c0c0; opacity: 1; }
.info { flex: 0 1 253px; height: 23px; display: flex; align-items: center; padding-right: 3px; background: linear-gradient(#8a8a8a, #5b5b5b); }
.info button { height: 22px; width: 24px; flex: none; }
.info .signin { width: 54px; gap: 4px; font-size: 13px; font-family: "Noto Sans CJK SC", sans-serif; }
.info .slim { width: 12px; }
.info .slim .ic { width: 12px; }
.info .push { margin-left: auto; width: 20px; }
.info .bar { width: 1px; height: 22px; background: #858585; margin: 0 4px 0 5px; }
.winbtns { margin-left: auto; align-self: flex-start; display: flex; height: 19px; border: 1px solid #4c5a6b; border-top: 0; border-radius: 0 0 5px 5px; overflow: hidden; background: linear-gradient(#dce7f0, #b4c4d2 45%, #93a9bd 50%, #bfd0dd); }
.winbtns button { width: 27px; border-right: 1px solid #5d6c7d; }
.winbtns .x { width: 46px; border: 0; background: linear-gradient(#e3a08c, #cf5a3e 45%, #b82f1b 50%, #d8583f); }
.winbtns svg { width: 14px; height: 12px; }

.body { flex: 1; min-height: 0; display: flex; flex-direction: column; background: #5c5c5c; border-left: 1px solid #333; border-bottom: 1px solid #d5e3f2; }
.toolbar { flex: none; height: 24px; display: flex; align-items: center; background: #575757; border-top: 1px solid #3a3a3a; border-bottom: 1px solid #3d3d3d; overflow: hidden; }
.props { height: 27px; margin: 3px 0 1px; }
.grip, .hgrip {
  flex: none;
  background:
    repeating-linear-gradient(90deg, transparent 0 1px, #5a5a5a 1px 2px),
    repeating-linear-gradient(#1d1d1d 0 1px, #5a5a5a 1px 2px);
}
.grip { width: 5px; height: 17px; margin: 0 1px 0 2px; }
.tool { flex: none; width: 23px; height: 22px; }
.group { display: flex; flex: none; }
.group + .group { border-left: 1px solid #858585; margin-left: 2px; padding-left: 3px; }
.drop { width: 13px; color: #8d8d8d; }
.drop .ic { width: 13px; }
.second { margin-left: 4px; margin-right: 2px; }
.textstyle { flex: 1; min-width: 0; align-self: stretch; border: 0; border-radius: 0; appearance: none; padding: 0 18px; background: linear-gradient(#fff, #dcdcdc); color: #222; font: 13px "Open Sans", sans-serif; }

.combo { display: grid; align-items: center; height: 22px; min-width: 0; background: linear-gradient(#fdfdfd, #dedede); border: 1px solid #fff; color: #111; }
.combo > * { grid-area: 1 / 1; }
.combo select { width: 100%; min-width: 0; height: 20px; border: 0; border-radius: 0; background: none; appearance: none; padding: 0; color: #111; font: 12px "Liberation Serif", serif; }
.deco { display: flex; align-items: center; pointer-events: none; }
.tri { width: 0; height: 0; border: 4px solid transparent; border-top: 5px solid #111; border-bottom: 0; pointer-events: none; }
.combo .tri { justify-self: end; margin-right: 3px; }
.swatch { width: 10px; height: 10px; border: 1px solid #111; background: #fff; }
.layer { flex: 298 1 0; margin-left: 2px; }
.layer select { padding-left: 84px; font: 12px "Open Sans", sans-serif; }
.layer .deco { padding-left: 2px; gap: 1px; }
.layer .deco .ic { width: 16px; height: 14px; }
.laytools { display: flex; padding: 0 1px; margin-right: 1px; border-right: 1px solid #3d3d3d; }
.color { flex: 149 1 0; }
.color select { padding-left: 17px; }
.color .deco { padding-left: 5px; }
.split { flex: none; width: 8px; height: 24px; border: 2px solid #575757; border-width: 0 2px; background: #3b3b3b; }
.ltype { flex: 159 1 0; }
.ltype select { padding-left: 68px; }
.rule { width: 60px; height: 1px; background: #222; margin-left: 3px; }
.lweight { flex: 50 1 0; overflow: hidden; }
.lweight select { padding-left: 43px; }
.lweight .rule { width: 35px; }

.work { flex: 1; min-height: 0; display: flex; padding: 0 3px 0 0; }
.side { flex: none; width: 25px; overflow: hidden; display: flex; flex-direction: column; align-items: center; background: #5e5e5e; border: 1px solid #333; }
.side button { flex: none; width: 22px; height: 22px; }
.left { border-bottom: 0; border-left: 0; }
.right { align-self: flex-start; max-height: 100%; margin-left: 4px; }
.hgrip { width: 15px; height: 4px; margin: 2px 0; }
.pale { background: repeating-linear-gradient(90deg, transparent 0 1px, #666 1px 2px), repeating-linear-gradient(#a5a5a5 0 1px, #666 1px 2px); }
.canvas { flex: 1; min-width: 0; margin-left: 4px; background: #21272f; display: grid; grid-template: 100% / 100%; }
.canvas > * { grid-area: 1 / 1; }
.viewbar { align-self: start; display: flex; justify-content: space-between; align-items: center; padding: 5px 10px 0 3px; font: 12px/18px "Open Sans", "Noto Sans CJK SC", sans-serif; color: #eee; }
.docbtns { display: flex; gap: 8px; }
.docbtns svg { width: 12px; height: 12px; }
.drawing { width: 100%; height: 100%; display: block; }
.drawing text { font: 300 19px "Inter", sans-serif; fill: #f0f0f0; }

.command { flex: none; display: flex; margin-top: 2px; border-top: 1px solid #777; }
.cmdside { width: 23px; display: flex; flex-direction: column; align-items: center; gap: 7px; background: linear-gradient(#777, #404040); padding-top: 2px; }
.cmdside svg { width: 12px; height: 12px; }
.cmdside .big { width: 16px; height: 16px; }
.cmdmain { flex: 1; min-width: 0; }
.history { height: 36px; padding: 2px; background: #c7c7c7; color: #111; white-space: pre; overflow: hidden; }
.history p { margin: 0; height: 15px; font: 13px/15px "Noto Sans CJK SC", sans-serif; }
.mono { font: 12px/15px "DejaVu Sans Mono", monospace; }
.entry { display: flex; align-items: center; height: 22px; padding-left: 4px; background: #fff; }
.entry button { color: #888; }
.entry .small { width: 13px; }
.entry input { flex: 1; min-width: 0; height: 22px; border: 0; outline: 0; padding: 0 3px 1px; font: 13px "Noto Sans CJK SC", sans-serif; }
.entry input::placeholder { color: #999; opacity: 1; }

.status { flex: none; height: 29px; position: relative; display: flex; justify-content: flex-end; align-items: center; padding-right: 1px; background: #393939; border-top: 1px solid #555; }
.cell { height: 27px; display: flex; align-items: center; justify-content: center; background: #4d4d4d; border: 1px solid #7c7c7c; border-right: 0; color: #c9c9c9; }
.cell button { width: 24px; height: 25px; }
.cell .dd { width: 15px; }
.cell .tri { border-top-color: #fff; }
.cell .model { width: 29px; color: #fff; font: 700 12px "Noto Sans CJK SC", sans-serif; }
.roomy { width: 27px; }
.grow { width: 112px; justify-content: flex-start; }
.cell .on { color: #2d88ee; }
.cell .scale { width: 56px; gap: 6px; font-size: 12px; }
.wide { width: 40px; }
.mark { position: absolute; right: 9px; top: -4px; display: flex; gap: 4px; white-space: nowrap; font: 21px/28px "Liberation Sans", "Noto Sans CJK SC", sans-serif; color: #fff; text-shadow: 1px 1px 1px #111, 2px 2px 1px #222; pointer-events: none; }
.mark b { font-family: "Noto Sans CJK SC", sans-serif; font-weight: 900; }
</style>
